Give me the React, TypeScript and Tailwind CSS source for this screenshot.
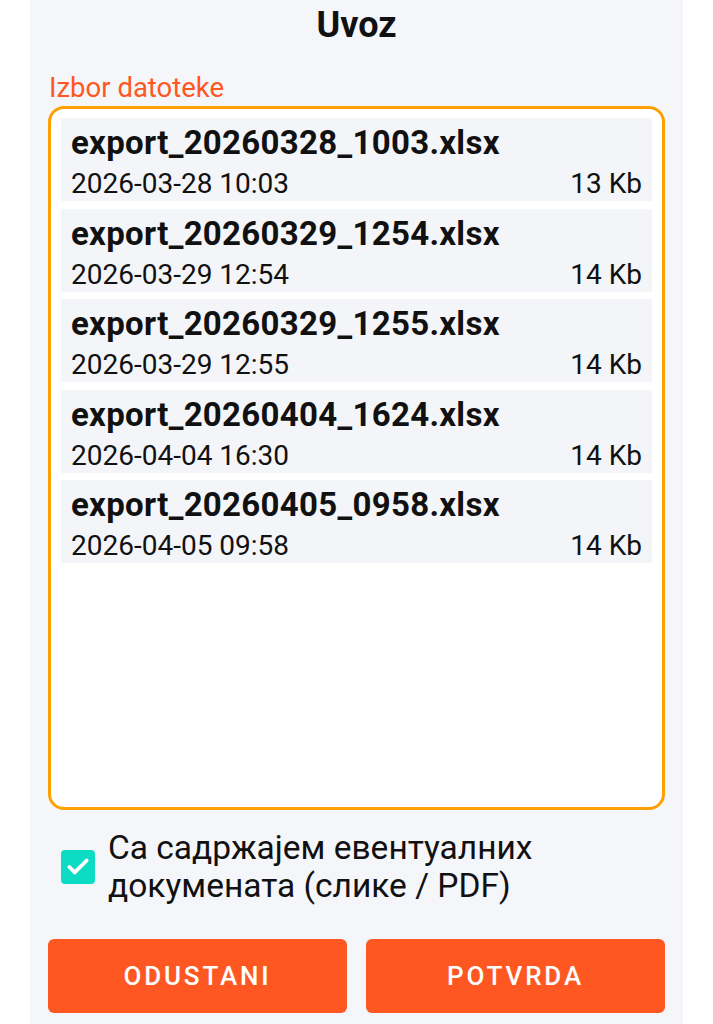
import { Check } from "lucide-react";

type ExportFile = {
  name: string;
  date: string;
  size: string;
};

const files: ExportFile[] = [
  { name: "export_20260328_1003.xlsx", date: "2026-03-28 10:03", size: "13 Kb" },
  { name: "export_20260329_1254.xlsx", date: "2026-03-29 12:54", size: "14 Kb" },
  { name: "export_20260329_1255.xlsx", date: "2026-03-29 12:55", size: "14 Kb" },
  { name: "export_20260404_1624.xlsx", date: "2026-04-04 16:30", size: "14 Kb" },
  { name: "export_20260405_0958.xlsx", date: "2026-04-05 09:58", size: "14 Kb" },
];

function FileRow({ file }: { file: ExportFile }) {
  return (
    <div className="bg-[#f4f5f9] px-[10px] pt-[6px] h-[83px] shrink-0">
      <div className="text-[33px] leading-[38px] font-bold tracking-[0.3px] text-[#111]">{file.name}</div>
      <div className="mt-[5px] flex justify-between text-[28px] leading-[33px] text-[#111]">
        <span>{file.date}</span>
        <span>{file.size}</span>
      </div>
    </div>
  );
}

export default function App() {
  return (
    <div className="min-h-screen bg-white" style={{ fontFamily: "Roboto, 'Noto Sans', sans-serif" }}>
      <div className="mx-[30px] w-[653px] h-[1024px] bg-[#f5f6fa] flex flex-col">
        <h1 className="text-center text-[36px] leading-[50px] font-bold text-[#111]">Uvoz</h1>
        <div className="px-[19px] mt-[22px] text-[27.5px] leading-[32px] text-[#ff5722]">Izbor datoteke</div>

        {/* file picker */}
        <div className="mx-[18px] mt-[2px] h-[704px] border-[3px] border-[#ffa000] rounded-[16px] bg-white pt-[9px] px-[10px] flex flex-col gap-[7.5px]">
          {files.map((f) => (
            <FileRow key={f.name} file={f} />
          ))}
        </div>

        <label className="flex items-center gap-[13px] mx-[31px] mt-[19px]">
          <span className="w-[34px] h-[34px] shrink-0 rounded-[4px] bg-[#0cdcc4] flex items-center justify-center">
            <Check className="w-[26px] h-[26px] text-white" strokeWidth={3.5} />
          </span>
          <span className="text-[33.5px] leading-[38px] text-[#111]">
            Са садржајем евентуалних докумената (слике / PDF)
          </span>
        </label>

        <div className="mx-[18px] mt-[34px] flex gap-[19px]">
          <button className="w-[299px] h-[74px] rounded-[6px] bg-[#ff5722] text-white text-[26px] font-medium tracking-[0.11em]">
            ODUSTANI
          </button>
          <button className="w-[299px] h-[74px] rounded-[6px] bg-[#ff5722] text-white text-[26px] font-medium tracking-[0.11em]">
            POTVRDA
          </button>
        </div>
      </div>
    </div>
  );
}
